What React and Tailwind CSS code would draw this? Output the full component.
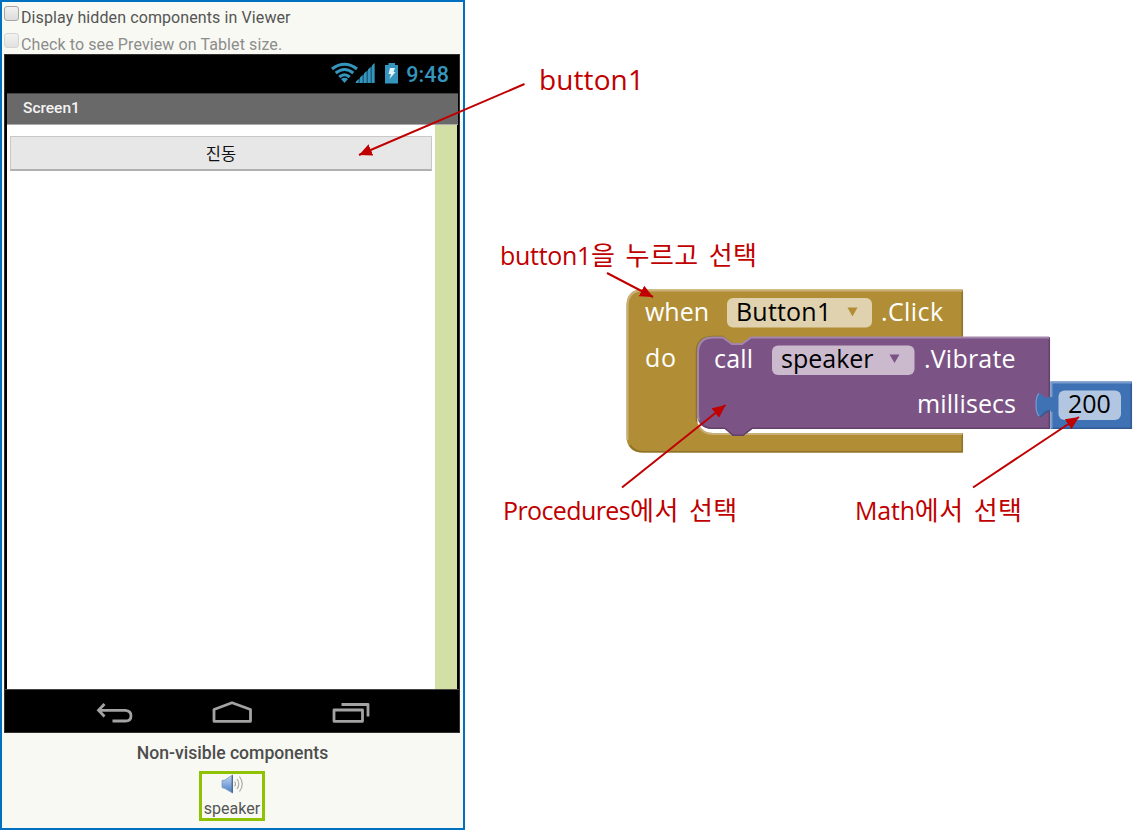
import React from "react";

const latin = "font-['Open_Sans','Noto_Sans_CJK_KR',sans-serif]";
const korean = "font-['Noto_Sans_CJK_KR',sans-serif]";

function CheckRow({ children, className, boxClass }) {
  return (
    <div className={`flex items-start ${className}`}>
      <span className={`mr-[2px] size-[15px] shrink-0 rounded-[3px] border bg-gradient-to-b from-[#f1f1f1] to-[#dcdcdc] ${boxClass}`} />
      <span className="mt-[2px] text-[16px] leading-5 tracking-[0.1px] whitespace-nowrap">{children}</span>
    </div>
  );
}

function StatusBar() {
  return (
    <div className="flex h-[38px] items-center justify-end pr-[10px] text-[#3595bd]">
      <svg className="h-[24px] w-[72px]" viewBox="332 62 72 24">
        <g fill="none" stroke="#3595bd" strokeWidth="3.1">
          <path d="M333 69 Q345.500 59.500 358 69" />
          <path d="M336.700 73 Q345.500 66 354.300 73" />
          <path d="M340.300 77 Q345.500 72.500 350.700 77" />
        </g>
        <path d="M342 79 Q345.500 76.500 349 79 L345.500 83Z" fill="#3595bd" />
        <path d="M356 83 L375.500 63.500 V83Z" fill="#1d5f7b" />
        <path d="M357 83V81.500L359.500 79V83ZM361 83V77.500L363.500 75V83ZM365 83V73.500L367.500 71V83ZM369 83V69.500L371.500 67V83ZM373 83V65.500L375.500 63V83Z" fill="#3595bd" />
        <path d="M386 65H389.500V63H396V65H399V83.500H386Z" fill="#3595bd" />
        <path d="M391 68H396L394.500 72H396.500L390.500 79L392 74H389.500Z" fill="#e2f4fa" />
      </svg>
      <span className="mt-[1px] ml-[3px] text-[21.5px] leading-6 font-medium tracking-[0.1px]">9:48</span>
    </div>
  );
}

function NavBar() {
  return (
    <div className="h-[43px] border-t border-[#444]">
      <svg className="h-[42px] w-full" viewBox="5 690 454 42" fill="none" stroke="#a3a3a3" strokeWidth="2.800">
        <path d="M104.500 704L98.500 710.300L104.500 716.500M99 710.300H125.500Q131 710.800 131 715.700Q131 721 125.500 721H112.500" />
        <path d="M214 721.300V709.500L232 702.700L250.500 709.500V721.300Z" strokeLinejoin="round" />
        <path d="M334 710H362.500V721.300H334ZM341.500 704.500H368V716.500" strokeLinejoin="round" />
      </svg>
    </div>
  );
}

function SpeakerIcon() {
  return (
    <svg className="h-5 w-6" viewBox="0 0 24 20">
      <defs>
        <linearGradient id="horn" x1="0" y1="0" x2="0" y2="1">
          <stop offset="0" stopColor="#c6dcf6" />
          <stop offset="1" stopColor="#477dc5" />
        </linearGradient>
      </defs>
      <path d="M2 6.500L5 6L12.500 1V19L5 14.500L2 13.500Z" fill="url(#horn)" stroke="#7e96b8" strokeWidth=".8" />
      <path d="M11.600 2V18L12.900 19.300V.8Z" fill="#4b6388" />
      <g fill="none" stroke="#aaa" strokeWidth="1.200">
        <path d="M14.500 7.500Q16.500 10 14.500 12.500M17 5Q20.500 10 17 15M19.500 2.500Q25 10 19.500 17.500" />
      </g>
    </svg>
  );
}

function Viewer() {
  return (
    <aside className="flex h-[830px] w-[465px] flex-col border-2 border-[#0070c0] bg-[#f8f9f3] pl-[2px] font-[Roboto,sans-serif] text-[#555]">
      <CheckRow className="mt-[4px] h-[27px]" boxClass="border-[#a5a5a5]">Display hidden components in Viewer</CheckRow>
      <CheckRow className="h-[21px] text-[#8c8c8c]" boxClass="border-[#ccc] opacity-80">Check to see Preview on Tablet size.</CheckRow>
      <div className="flex h-[679px] w-[456px] flex-col border border-[#332e30] bg-black">
        <StatusBar />
        <div className="ml-[2px] flex h-[32px] w-[451px] items-center border-t border-b border-t-[#444] border-b-[#aaa] bg-[#696969] pb-[1px] pl-[16px] text-[15.5px] font-medium text-[#f4f4f4]">Screen1</div>
        <div className="ml-[2px] flex h-[564px] w-[451px]">
          <div className="w-[428px] bg-white pt-[11px] pl-[3px]">
            <div className={`flex h-[35px] w-[422px] items-center justify-center border border-b-2 border-[#c8c8c8] border-b-[#b0b0b0] bg-[#e7e7e7] text-[16.5px] text-[#111] ${korean}`}>진동</div>
          </div>
          <div className="w-[22px] bg-[#d2e0a6]" />
        </div>
        <NavBar />
      </div>
      <div className="mt-[8px] w-[457px] text-center text-[17.6px] leading-6 font-medium text-[#4d4d4d]">Non-visible components</div>
      <div className="mt-[6px] ml-[195px] flex h-[50px] w-[66px] flex-col items-center border-[3px] border-[#8fc202] text-[16px] leading-5">
        <SpeakerIcon />
        <span className="mt-[6px] leading-[18px]">speaker</span>
      </div>
    </aside>
  );
}

function Blocks() {
  return (
    <svg className="absolute top-[280px] left-[620px] h-[180px] w-[523px]" viewBox="620 280 523 180">
      <path d="M642 289.500H963V337H751L742 343.500H732L723 336H713Q697 336 697 352V417Q697 433 713 433H963V452.500H643Q626.500 452.500 626.500 436V306Q626.500 289.500 642 289.500Z" fill="#b18e35" />
      <path d="M627.500 440V306Q627.500 290.500 643 290.500H962M698 425Q703 434 713 434H962" fill="none" stroke="#cab078" strokeWidth="2" />
      <path d="M962.300 292V336M962.300 435V451.800H643Q634 451.800 630 445M696.500 422V352Q696.500 336.500 713 336.500H723L732 343.500" fill="none" stroke="#8e722a" strokeWidth="1.500" />
      <path d="M713 337H723L732 343.500H742L751 337H1050V429H752L743 436H733L725 429H713Q697 429 697 413V353Q697 337 713 337Z" fill="#7c5385" />
      <path d="M699 420Q698 417 698 413V353Q698 337.500 713 337.500H723L732 344H742L751 337.500H1049" fill="none" stroke="#a387aa" strokeWidth="2" />
      <path d="M1049.300 339V428.300H752L743 435.300H733L725 428.300H713Q705 428.300 701 423" fill="none" stroke="#634269" strokeWidth="1.500" />
      <path d="M1050.500 381.500H1132V429H1050.500V410.500L1046 412L1040 417Q1036 416 1036 405Q1036 394 1040 393L1045 397.500L1050.500 397Z" fill="#3f71b5" />
      <path d="M1051.500 428V412M1051.500 397V382.500H1131" fill="none" stroke="#799cca" strokeWidth="2" />
      <path d="M1039 416Q1036 413 1036 405Q1036 396 1039 393.500" fill="none" stroke="#799cca" strokeWidth="1.200" />
      <path d="M1131.300 384V428.300H1053M1040 417L1046 412L1050 410.500" fill="none" stroke="#325a91" strokeWidth="1.500" />
      <rect x="727" y="298" width="145" height="29.500" rx="6" fill="#e0d2ae" />
      <rect x="772" y="345.500" width="142.500" height="29.500" rx="6" fill="#cbbace" />
      <rect x="1058.500" y="390.500" width="62.500" height="29.500" rx="6" fill="#b2c6e1" />
      <path d="M847.500 307.500H857.500L852.500 316.500Z" fill="#b18e35" />
      <path d="M889.500 354.500H899.500L894.500 363Z" fill="#7c5385" />
    </svg>
  );
}

function BlockText({ className, children }) {
  return <span className={`absolute text-[25px] leading-8 whitespace-nowrap ${className}`}>{children}</span>;
}

function Arrows() {
  return (
    <svg className="absolute top-0 left-0 h-[830px] w-[1143px]" viewBox="0 0 1143 830">
      <defs>
        <marker id="head" markerUnits="userSpaceOnUse" markerWidth="14" markerHeight="12" refX="13" refY="6" orient="auto">
          <path d="M0 0L13 6L0 12Z" fill="#c00000" />
        </marker>
      </defs>
      <g stroke="#c00000" strokeWidth="2">
        <path d="M524.500 84L359 155" markerEnd="url(#head)" />
        <path d="M607 273L653 297" markerEnd="url(#head)" />
        <path d="M622 487.500L725.500 405" markerEnd="url(#head)" />
        <path d="M973 487.500L1079 417" markerEnd="url(#head)" />
      </g>
    </svg>
  );
}

function Note({ className, word, wordClass, children }) {
  return (
    <div className={`absolute flex items-baseline text-[25px] leading-8 whitespace-nowrap text-[#c00000] ${className}`}>
      <span className={wordClass}>{word}</span>
      <span className={`text-[26px] leading-8 font-normal tracking-[0.4px] [word-spacing:4px] ${korean}`}>{children}</span>
    </div>
  );
}

export default function App() {
  return (
    <main className="relative h-[830px] w-[1143px] overflow-hidden bg-white">
      <Viewer />
      <div className={`absolute inset-0 ${latin}`}>
        <Blocks />
        <BlockText className="top-[295px] left-[645px] text-white">when</BlockText>
        <BlockText className="top-[295px] left-[736px] tracking-[0.2px] text-black">Button1</BlockText>
        <BlockText className="top-[295px] left-[881px] tracking-[0.4px] text-white">.Click</BlockText>
        <BlockText className="top-[341px] left-[645px] tracking-[0.6px] text-white">do</BlockText>
        <BlockText className="top-[342px] left-[714px] tracking-[0.2px] text-white">call</BlockText>
        <BlockText className="top-[342px] left-[781px] text-black">speaker</BlockText>
        <BlockText className="top-[342px] left-[924px] tracking-[0.2px] text-white">.Vibrate</BlockText>
        <BlockText className="top-[387px] left-[917px] tracking-[0.1px] text-white">millisecs</BlockText>
        <BlockText className="top-[387px] left-[1068px] text-black">200</BlockText>
        <div className="absolute top-[61px] left-[539px] text-[28px] leading-9 tracking-[0.1px] text-[#c00000]">button1</div>
        <Note className="top-[238px] left-[500px]" word="button1" wordClass="tracking-[-0.3px]">을 누르고 선택</Note>
        <Note className="top-[493px] left-[503px]" word="Procedures" wordClass="tracking-[-0.6px]">에서 선택</Note>
        <Note className="top-[493px] left-[855px]" word="Math" wordClass="tracking-[-0.2px]">에서 선택</Note>
      </div>
      <Arrows />
    </main>
  );
}
